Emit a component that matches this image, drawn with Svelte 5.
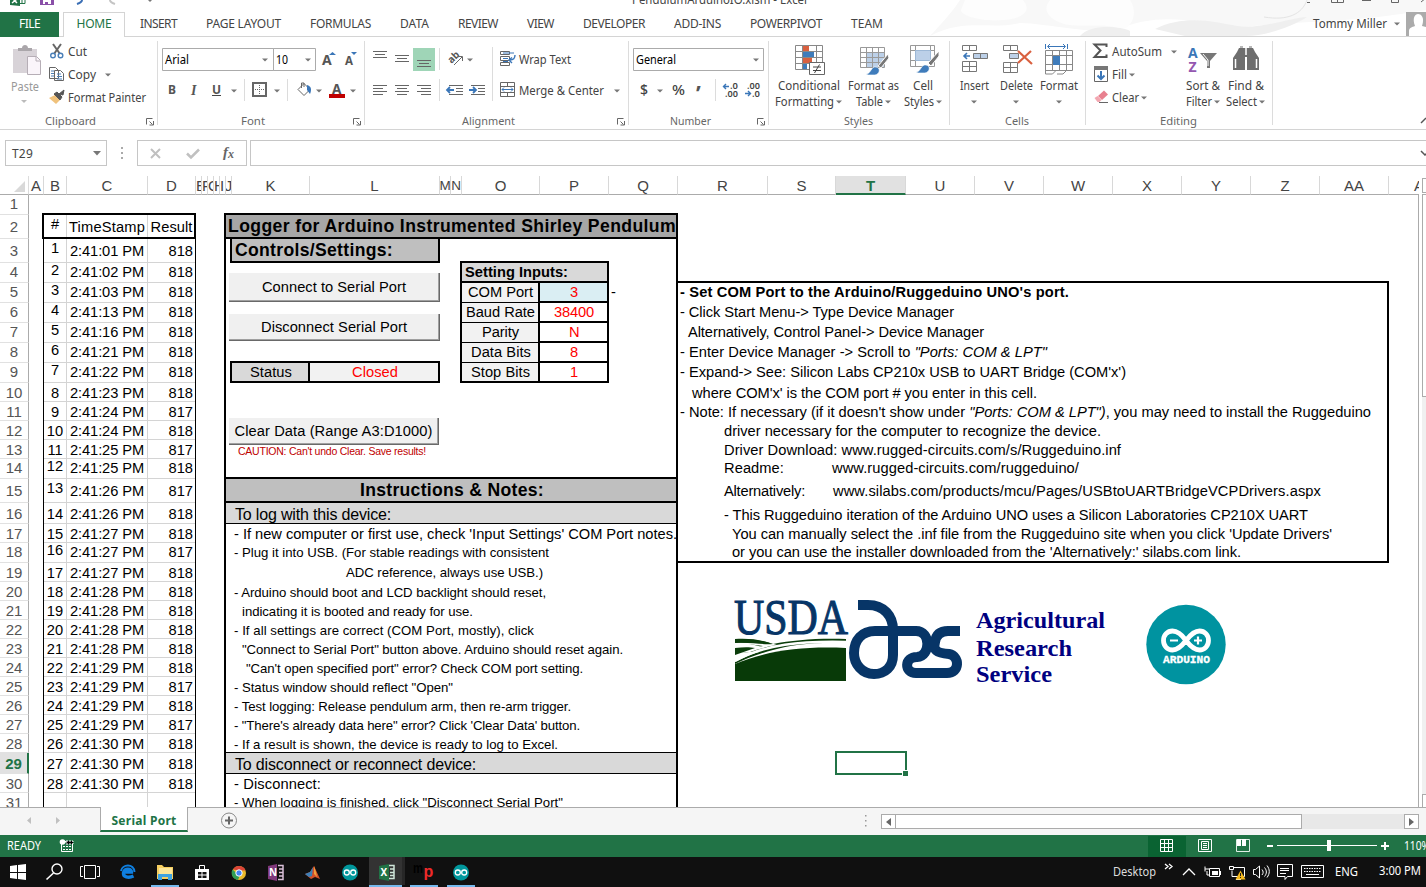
<script>
  // Shares out letter spacing so that a label fills the given width.
  function fit(node, width) {
    const n = node.textContent.length;
    const natural = node.getBoundingClientRect().width;
    if (width && n) node.style.letterSpacing = (width - natural) / n + 'px';
  }

  const tabs = [
    ['INSERT', 37], ['PAGE LAYOUT', 75], ['FORMULAS', 61], ['DATA', 29], ['REVIEW', 40], ['VIEW', 27],
    ['DEVELOPER', 62], ['ADD-INS', 47], ['POWERPIVOT', 72], ['TEAM', 32]
  ];

  const cols = [
    ['A', 15], ['B', 23], ['C', 81], ['D', 48], ['E', 6], ['F', 6], ['G', 6], ['H', 6], ['I', 6], ['J', 6],
    ['K', 78], ['L', 130], ['M', 11], ['N', 11], ['O', 78], ['P', 69], ['Q', 69], ['R', 90], ['S', 68],
    ['T', 70], ['U', 69], ['V', 69], ['W', 69], ['X', 69], ['Y', 69], ['Z', 69], ['AA', 69], ['AB', 30]
  ];
  const rowHeights = [
    20, 24, 24, 20, 20, 20, 20, 20, 20, 19, 19, 19, 19, 20, 24, 21, 19, 20, 19, 19,
    19, 19, 19, 19, 19, 19, 19, 19, 21, 19, 19
  ];
  const colTracks = '29px ' + cols.map((c) => c[1] + 'px').join(' ');
  const rowTracks = '19px ' + rowHeights.map((h) => h + 'px').join(' ');

  // Baseline correction of the 20px rows and of the larger and smaller type.
  const cellShift = (r) => (rowHeights[r - 1] === 20 ? -1 : 0);
  function lineShift(r, c = '') {
    if (c.startsWith('h')) return -2;
    if (c === 's') return r === 18 ? -1 : r >= 20 && r <= 28 ? 1 : 0;
    if (rowHeights[r - 1] === 20) return -2;
    return { 15: -1, 16: 1, 29: 1 }[r] ?? 0;
  }

  const times = [
    '01', '02', '03', '13', '16', '21', '22', '23', '24', '24', '25', '25', '26', '26', '27', '27', '27',
    '28', '28', '28', '28', '29', '29', '29', '29', '30', '30', '30'
  ];
  const low = [9, 11, 13, 16, 23, 25];
  const raised = [1, 2, 3, 4, 5, 6, 7, 12, 13, 16];
  const log = times.map((s, i) => ({
    n: i + 1,
    time: `2:41:${s} PM`,
    value: low.includes(i + 1) ? 817 : 818,
    up: raised.includes(i + 1)
  }));

  // Boxes: column start / end and row start / end as sheet letters and numbers.
  const at = (c) => cols.findIndex((k) => k[0] === c) + 2;
  const area = (c1, r1, c2, r2) => `${r1 + 1} / ${at(c1)} / ${r2 + 2} / ${at(c2) + 1}`;
  const boxes = [
    ['J', 2, 'Q', 31, 'thick white'],
    ['J', 2, 'Q', 2, 'thick title'],
    ['K', 3, 'L', 3, 'thick mid'],
    ['J', 15, 'Q', 15, 'thick mid'],
    ['J', 16, 'Q', 16, 'side light'],
    ['J', 29, 'Q', 29, 'side light lined'],
    ['O', 4, 'P', 4, 'thick light'],
    ['O', 5, 'O', 9, 'thick pale'],
    ['P', 5, 'P', 5, 'thick blue'],
    ['P', 6, 'P', 6, 'thick white'],
    ['P', 7, 'P', 7, 'thick white'],
    ['P', 8, 'P', 8, 'thick white'],
    ['P', 9, 'P', 9, 'thick white'],
    ['O', 5, 'O', 5, 'thin'],
    ['O', 6, 'O', 6, 'thin'],
    ['O', 7, 'O', 7, 'thin'],
    ['O', 8, 'O', 8, 'thin'],
    ['K', 9, 'K', 9, 'thick light'],
    ['L', 9, 'L', 9, 'thick pale'],
    ['R', 5, 'AA', 18, 'thick white']
  ];

  const texts = [
    { r: 2, x: 228, w: 448, t: 'Logger for Arduino Instrumented Shirley Pendulum', c: 'h b' },
    { r: 3, x: 235, w: 158, t: 'Controls/Settings:', c: 'h b' },
    { r: 15, x: 360, w: 184, t: 'Instructions & Notes:', c: 'h b' },
    { r: 16, x: 235, w: 156, t: 'To log with this device:', c: 'm' },
    { r: 29, x: 235, w: 241, t: 'To disconnect or reconnect device:', c: 'm' },
    { r: 4, x: 465, w: 103, t: 'Setting Inputs:', c: 'b' },
    { r: 5, x: 468, w: 65, t: 'COM Port' },
    { r: 6, x: 466, w: 69, t: 'Baud Rate' },
    { r: 7, x: 482, w: 37, t: 'Parity' },
    { r: 8, x: 471, w: 60, t: 'Data Bits' },
    { r: 9, x: 471, w: 59, t: 'Stop Bits' },
    { r: 5, x: 570, w: 8, t: '3', c: 'red' },
    { r: 6, x: 554, w: 40, t: '38400', c: 'red' },
    { r: 7, x: 569, w: 10, t: 'N', c: 'red' },
    { r: 8, x: 570, w: 8, t: '8', c: 'red' },
    { r: 9, x: 570, w: 8, t: '1', c: 'red' },
    { r: 5, x: 611, w: 5, t: '-' },
    { r: 9, x: 250, w: 42, t: 'Status' },
    { r: 9, x: 352, w: 46, t: 'Closed', c: 'red' },
    { r: 17, x: 234, w: 443, t: "- If new computer or first use, check 'Input Settings' COM Port notes." },
    { r: 18, x: 234, w: 315, t: '- Plug it into USB. (For stable readings with consistent', c: 's' },
    { r: 19, x: 346, w: 197, t: 'ADC reference, always use USB.)', c: 's' },
    { r: 20, x: 234, w: 312, t: '- Arduino should boot and LCD backlight should reset,', c: 's' },
    { r: 21, x: 242, w: 231, t: 'indicating it is booted and ready for use.', c: 's' },
    { r: 22, x: 234, w: 300, t: '- If all settings are correct (COM Port, mostly), click', c: 's' },
    { r: 23, x: 242, w: 381, t: '"Connect to Serial Port" button above. Arduino should reset again.', c: 's' },
    { r: 24, x: 246, w: 337, t: '"Can\'t open specified port" error? Check COM port setting.', c: 's' },
    { r: 25, x: 234, w: 219, t: '- Status window should reflect "Open"', c: 's' },
    { r: 26, x: 234, w: 337, t: '- Test logging: Release pendulum arm, then re-arm trigger.', c: 's' },
    { r: 27, x: 234, w: 346, t: '- "There\'s already data here" error? Click \'Clear Data\' button.', c: 's' },
    { r: 28, x: 234, w: 324, t: '- If a result is shown, the device is ready to log to Excel.', c: 's' },
    { r: 30, x: 234, w: 87, t: '- Disconnect:' },
    { r: 31, x: 234, w: 329, t: '- When logging is finished, click "Disconnect Serial Port"', c: 's' },
    { r: 5, x: 680, w: 389, t: "- Set COM Port to the Arduino/Ruggeduino UNO's port.", c: 'b' },
    { r: 6, x: 680, w: 274, t: '- Click Start Menu-> Type Device Manager' },
    { r: 7, x: 688, w: 296, t: 'Alternatively, Control Panel-> Device Manager' },
    { r: 8, x: 680, w: 367, t: '- Enter Device Manager -> Scroll to ', i: '"Ports: COM & LPT"' },
    { r: 9, x: 680, w: 446, t: "- Expand-> See: Silicon Labs CP210x USB to UART Bridge (COM'x')" },
    { r: 10, x: 692, w: 345, t: "where COM'x' is the COM port # you enter in this cell." },
    { r: 11, x: 680, w: 691, t: "- Note: If necessary (if it doesn't show under ", i: '"Ports: COM & LPT")', e: ', you may need to install the Ruggeduino' },
    { r: 12, x: 724, w: 377, t: 'driver necessary for the computer to recognize the device.' },
    { r: 13, x: 724, w: 397, t: 'Driver Download: www.rugged-circuits.com/s/Ruggeduino.inf' },
    { r: 14, x: 724, w: 60, t: 'Readme:' },
    { r: 14, x: 832, w: 247, t: 'www.rugged-circuits.com/ruggeduino/' },
    { r: 15, x: 724, w: 81, t: 'Alternatively:' },
    { r: 15, x: 833, w: 488, t: 'www.silabs.com/products/mcu/Pages/USBtoUARTBridgeVCPDrivers.aspx' },
    { r: 16, x: 724, w: 584, t: '- This Ruggeduino iteration of the Arduino UNO uses a Silicon Laboratories CP210X UART' },
    { r: 17, x: 732, w: 600, t: "You can manually select the .inf file from the Ruggeduino site when you click 'Update Drivers'" },
    { r: 18, x: 732, w: 509, t: "or you can use the installer downloaded from the 'Alternatively:' silabs.com link." }
  ];
</script>

{#snippet t(x, y, w, s, c = '')}
  <text {x} {y} textLength={w} lengthAdjust="spacingAndGlyphs" class={c}>{s}</text>
{/snippet}
{#snippet arrow(x, y, c = '#777')}
  <path d="M{x - 3} {y - 1}h6l-3 3z" fill={c} />
{/snippet}
{#snippet launcher(x)}
  <path d="M{x} 124.500v-6h6M{x + 3} 121.500l3 3M{x + 3} 125h4v-4" fill="none" stroke="#666" />
{/snippet}
{#snippet infinity(cx, cy)}
  <circle {cx} {cy} r="8" fill="#00979c" />
  <circle cx={cx - 3.2} {cy} r="2.500" fill="none" stroke="#fff" stroke-width="1.300" />
  <circle cx={cx + 3.2} {cy} r="2.500" fill="none" stroke="#fff" stroke-width="1.300" />
{/snippet}

<div class="window">
  <header>
    <svg class="art" viewBox="920 0 506 36" width="506" height="36">
      <path d="M930 36C965 18 990 30 1020 23C1050 24 1080 32 1112 31C1140 20 1160 18 1184 20L1240 28C1290 20 1340 25 1426 10V0H960C950 15 940 25 930 36z" fill="#f8f8f8" />
      <path d="M965 0h58c10 12-2 19-20 20-20 2-42-4-42-10zM1050 0h80c8 12 3 26-8 30-14-8-45-2-58-6-16-5-22-14-14-24z" fill="#fdfdfd" />
      <path d="M1080 36c10-12 40-10 50-5v5zM1155 29c30-15 60-7 82-3 22 4 56-9 70-9-14 9-40 19-62 19h-60z" fill="#efefef" />
      <path d="M1264 17c24 4 38-3 43-17" stroke="#e4e4e4" fill="none" />
    </svg>
    <svg class="titlebar" viewBox="0 0 1426 12" width="1426" height="12">
      <path d="M10 0h10v6l-10-1z" fill="#217346" /><path d="M12 3l5-4M13-1l4 4" stroke="#fff" stroke-width="1.500" />
      <path d="M20 3.500h5V0M22 0v3" stroke="#217346" fill="none" />
      <path d="M40 0h14v5H40z" fill="#8a4fa8" /><path d="M43 0h8v4h-3V2h-3v2h-2z" fill="#fff" />
      <path d="M82 0c0 2-2 3-5 4" stroke="#3b6fb5" stroke-width="2" fill="none" />
      <path d="M110 0c0 2 2 3 5 4" stroke="#c4c4c4" stroke-width="2" fill="none" />
      {@render arrow(150, 0)}
      {@render t(632, 4, 175, 'PendulumArduinoIO.xlsm - Excel')}
      <path d="M1307 2.500h3M1331.500 0v2.500h12V0M1337.500 0v2M1362 .5h9M1391.500 0v2.500h7V0M1421 2l5-4" stroke="#666" fill="none" />
    </svg>
    <nav>
      <span class="file"><span use:fit={21}>FILE</span></span>
      <span class="home"><span use:fit={35}>HOME</span></span>
      <div class="tabs">
        {#each tabs as [name, w]}
          <span class="tab" style:width="{w}px"><span use:fit={w}>{name}</span></span>
        {/each}
      </div>
      <svg class="user" viewBox="1310 12 116 24" width="116" height="24">
        {@render t(1313, 28, 74, 'Tommy Miller')}
        {@render arrow(1397, 23.5)}
        <path d="M1406 12h20v24h-20z" fill="#ababab" />
        <path d="M1409 36v-5c0-3 3-4 6-5-3-8 0-12 3-12s7 3 4 12l4 1v9z" fill="#fff" />
      </svg>
    </nav>
  </header>

  <section class="ribbon">
    <svg class="group" viewBox="0 37 158 92" width="158" height="92">
      <path d="M13 49h24v24H13z" fill="#d8d3d8" /><path d="M18 51v-3h4c0-4 6-4 6 0h4v3z" fill="#aaa6aa" />
      <path d="M27.500 56.500h9l4 4v14h-13z" fill="#faf5fa" stroke="#b6aeb6" /><path d="M36 57v4h4" stroke="#b6aeb6" fill="none" />
      {@render t(11, 91, 28, 'Paste', 'dim')}
      {@render arrow(24, 101, '#bbb')}
      <path d="M53 44l7 10M61 44l-7 10" stroke="#666" stroke-width="2" />
      <circle cx="53" cy="55.500" r="2.300" fill="#fff" stroke="#4a7fb8" stroke-width="1.400" />
      <circle cx="60.500" cy="55.500" r="2.300" fill="#fff" stroke="#4a7fb8" stroke-width="1.400" />
      {@render t(68, 56, 19, 'Cut')}
      <path d="M49.500 67.500h6l3 3v8h-9zM54.500 70.500h6l3 3v7h-9z" fill="#fff" stroke="#666" />
      <path d="M51 71h3M51 73.500h3M51 76h3M57 74h4M57 76.500h5M57 79h5" stroke="#4a7fb8" />
      {@render t(68, 79, 28, 'Copy')}
      {@render arrow(108, 74.5)}
      <path d="M49 98l6-3 5 5-4 4z" fill="#f0c27c" /><path d="M54 94l6 6 2-3-5-5zM59 94l5-4-1 5z" fill="#555" stroke="#555" />
      {@render t(68, 102, 78, 'Format Painter')}
      {@render t(45, 125, 51, 'Clipboard', 'cap')}
      {@render launcher(146.500)}
      <path d="M157.500 41v84" stroke="#dcdcdc" />
    </svg>
    <svg class="group" viewBox="158 37 207 92" width="207" height="92">
      <path d="M162.500 48.500h111v22h-111zM273.500 48.500h42v22h-42z" fill="#fff" stroke="#ababab" />
      {@render t(165, 64, 24, 'Arial', 'blk')}{@render arrow(265, 59.5)}
      {@render t(276, 64, 12, '10', 'blk')}{@render arrow(308, 59.5)}
      <text x="322" y="65" class="sb" style:font-size="14px">A</text><path d="M329 55l3.500-3 3.500 3z" fill="#3a76b8" />
      <text x="345" y="65" class="sb" style:font-size="11.500px">A</text><path d="M351 52h6l-3 3z" fill="#3a76b8" />
      <text x="168" y="94" class="sb">B</text>
      <text x="191" y="94.500" class="sb it">I</text>
      <text x="212" y="94" class="sb">U</text><path d="M212 95.500h9" stroke="#444" />
      {@render arrow(234, 90.5)}
      <path d="M244.500 79v22M287.500 79v22" stroke="#dcdcdc" />
      <path d="M253 83h13v13h-13z" fill="#fff" stroke="#666" stroke-width="2" />
      <path d="M255 89.500h9M259.500 85v9" stroke="#666" stroke-dasharray="1 1" />
      {@render arrow(277, 90.5)}
      <path d="M298 89.500l6-6 6 6-6 6zM301.500 88v-5h2.500v4" fill="#fff" stroke="#666" /><path d="M307 85c4 1 5 4 3 9l-3-4z" fill="#3a76b8" />
      {@render arrow(319, 90.5)}
      <text x="332" y="94" class="sb" style:font-size="13.500px">A</text><path d="M329 94h16v4h-16z" fill="#c00000" />
      {@render arrow(353, 90.5)}
      {@render t(241, 125, 24, 'Font', 'cap')}
      {@render launcher(353.500)}
      <path d="M364.500 41v84" stroke="#dcdcdc" />
    </svg>
    <svg class="group" viewBox="365 37 264 92" width="264" height="92">
      <path d="M413 48h22v23h-22z" fill="#9fd5b7" />
      <path d="M373 51.500h14M375 54.500h10M373 57.500h14" stroke="#666" />
      <path d="M395 55.500h14M397 58.500h10M395 61.500h14" stroke="#666" />
      <path d="M417 60.500h14M419 63.500h10M417 66.500h14" stroke="#666" />
      <path d="M373 85.500h14M373 88.500h10M373 91.500h14M373 94.500h10M395 85.500h14M397 88.500h10M395 91.500h14M397 94.500h10M417 85.500h14M421 88.500h10M417 91.500h14M421 94.500h10" stroke="#666" />
      <path d="M439.500 48v22M439.500 79v22M492.500 47v54" stroke="#dcdcdc" />
      <text transform="translate(451.500 64) rotate(-45)" class="sb" style:font-size="10px">ab</text>
      <path d="M454 65l8-8M458 56.500h4.500V61" stroke="#666" fill="none" />
      {@render arrow(470, 59.5)}
      <path d="M449 85.500h14M456 88.500h7M456 91.500h7M449 94.500h14M471 85.500h14M478 88.500h7M478 91.500h7M471 94.500h14" stroke="#666" />
      <path d="M454 90h-6M450 87l-3 3 3 3M469 90h6M473 87l3 3-3 3" stroke="#3a76b8" stroke-width="1.800" fill="none" />
      <path d="M500.500 51.500h9v3h-9zM500.500 56.500h9v4h-9zM500.500 62.500h9v3h-9z" fill="#fff" stroke="#666" />
      <path d="M503 53h11M503 58.500h5M503 61.500h5" stroke="#3a76b8" />
      <path d="M515 55c0 4-2 5-5 5M512 57.500l-3 2.500 3 3" stroke="#3a76b8" fill="none" stroke-width="1.400" />
      {@render t(519, 64, 52, 'Wrap Text')}
      <path d="M500.500 82.500h14v14h-14zM500 86.500h15M500 92.500h15M507.500 82v4M507.500 93v4" fill="none" stroke="#666" />
      <path d="M502 89.500h11M504 87.500l-2 2 2 2M511 87.500l2 2-2 2" stroke="#3a76b8" fill="none" />
      {@render t(519, 95, 85, 'Merge & Center')}
      {@render arrow(617, 90.5)}
      {@render t(462, 125, 53, 'Alignment', 'cap')}
      {@render launcher(617.500)}
      <path d="M628.500 41v84" stroke="#dcdcdc" />
    </svg>
    <svg class="group" viewBox="629 37 140 92" width="140" height="92">
      <path d="M633.500 48.500h130v22h-130z" fill="#fff" stroke="#ababab" />
      {@render t(636, 64, 40, 'General', 'blk')}{@render arrow(756, 59.5)}
      <text x="640" y="95" class="pct">$</text>{@render arrow(660, 90.5)}
      {@render t(672, 95, 13, '%', 'pct')}
      <text x="696" y="101" class="sb" style:font-size="22px">’</text>
      <path d="M715.500 79v22" stroke="#dcdcdc" />
      {@render t(730, 89, 8, '.0', 'dec')}{@render t(725, 96.5, 13, '.00', 'dec')}
      {@render t(747, 89, 13, '.00', 'dec')}{@render t(752, 96.5, 8, '.0', 'dec')}
      <path d="M729 86.500h-5M726 84l-2.500 2.500L726 89M745 93.500h5M748 91l2.500 2.500L748 96" stroke="#3a76b8" stroke-width="1.400" fill="none" />
      {@render t(670, 125, 41, 'Number', 'cap')}
      {@render launcher(757.500)}
      <path d="M768.500 41v84" stroke="#dcdcdc" />
    </svg>
    <svg class="group" viewBox="769 37 181 92" width="181" height="92">
      <path d="M795.500 45.500h27v24h-27zM795 51.500h28M795 57.500h28M795 63.500h28M802.500 45v25M816.500 45v25" fill="#fff" stroke="#888" />
      <path d="M803 46h6v5h-6zM803 58h9v5h-9z" fill="#d9603f" /><path d="M803 52h11v5h-11zM803 64h4v5h-4z" fill="#3f7cbb" />
      <path d="M809.500 62.500h15v12h-15z" fill="#fff" stroke="#666" /><path d="M813 67h8M813 70.500h8M819.500 64.500l-5 8.500" stroke="#444" />
      {@render t(778, 90, 62, 'Conditional')}
      {@render t(775, 106, 59, 'Formatting')}{@render arrow(839, 101.5)}
      <path d="M866 53h18v14h-18z" fill="#bcd0e8" />
      <path d="M860.500 47.500h24v20h-24zM860 52.500h25M860 57.500h25M860 62.500h25M866.500 47v21M872.500 47v21M878.500 47v21" fill="none" stroke="#999" />
      <path d="M888 54l-10 12 3 2 8-10z" fill="#777" stroke="#fff" /><path d="M866 74c5 0 5-8 10-7s4 7-1 8h-7z" fill="#3f7cbb" stroke="#fff" stroke-width=".6" />
      {@render t(848, 90, 51, 'Format as')}
      {@render t(856, 106, 27, 'Table')}{@render arrow(888, 101.5)}
      <path d="M910.500 45.500h24v21h-24zM910 50.500h25M910 60.500h25M915.500 45v21M930.500 45v21" fill="#fff" stroke="#999" /><path d="M915.500 50.500h15v10h-15z" fill="#bcd0e8" stroke="#9db8d6" />
      <path d="M939 51l-11 12 3 3 8-10z" fill="#777" stroke="#fff" /><path d="M916 72c5 0 5-8 10-7s4 7-1 8h-7z" fill="#3f7cbb" stroke="#fff" stroke-width=".6" />
      {@render t(913, 90, 20, 'Cell')}
      {@render t(904, 106, 30, 'Styles')}{@render arrow(939, 101.5)}
      {@render t(844, 125, 29, 'Styles', 'cap')}
      <path d="M949.500 41v84" stroke="#dcdcdc" />
    </svg>
    <svg class="group" viewBox="950 37 136 92" width="136" height="92">
      <path d="M962.500 45.500h14v5h-14zM969.500 45v5M962.500 61.500h14v10h-14zM962 66.500h15M969.500 61v10" fill="#fff" stroke="#777" />
      <path d="M973.500 53.500h14v5h-14zM980.500 53v5" fill="#bcd0e8" stroke="#777" /><path d="M970 56h-6M967 53l-3 3 3 3" stroke="#3a76b8" stroke-width="1.600" fill="none" />
      {@render t(960, 90, 29, 'Insert')}{@render arrow(974, 101.5)}
      <path d="M1003.500 45.500h14v5h-14zM1010.500 45v5M1003.500 62.500h14v10h-14zM1003 67.500h15M1010.500 62v10" fill="#fff" stroke="#777" />
      <path d="M1009.500 53.500h9v5h-9z" fill="#bcd0e8" stroke="#777" /><path d="M1018 51l14 13M1031 51l-13 12" stroke="#d9603f" stroke-width="2.200" />
      {@render t(1000, 90, 33, 'Delete')}{@render arrow(1016, 101.5)}
      <path d="M1045.500 50.500h27v20h-27zM1045 55.500h28M1045 64.500h28M1052.500 50v20M1059.500 50v20M1066.500 50v20M1045.500 70v4h7l3-3M1057 74h6l3-3" fill="#fff" stroke="#888" />
      <path d="M1053 56h7v9h-7z" fill="#3f7cbb" /><path d="M1045.500 44v5M1067.500 44v5M1048 46.500h17M1050 44l-2.500 2.500L1050 49M1063 44l2.500 2.500L1063 49" stroke="#3a76b8" fill="none" />
      {@render t(1040, 90, 38, 'Format')}{@render arrow(1059, 101.5)}
      {@render t(1005, 125, 24, 'Cells', 'cap')}
      <path d="M1085.500 41v84" stroke="#dcdcdc" />
    </svg>
    <svg class="group last" viewBox="1086 37 340 92" width="340" height="92">
      <path d="M1106.500 47v-2.500h-12l6 6-6 6.500h12v-2.500" fill="none" stroke="#555" stroke-width="2" />
      {@render t(1112, 56, 50, 'AutoSum')}{@render arrow(1174, 51.5)}
      <path d="M1094.500 66.500h13v15h-13z" fill="#fff" stroke="#666" /><path d="M1094 66h14v4h-14z" fill="#777" /><path d="M1101 71v8M1097.500 75.500l3.500 3.500 3.500-3.500" stroke="#3a76b8" stroke-width="2" fill="none" />
      {@render t(1112, 79, 15, 'Fill')}{@render arrow(1132, 74.5)}
      <path d="M1098 96l6-5.500 4 4-6 5.500z" fill="#e8808f" /><path d="M1094.500 98l3-2 4 4-2 2h-2z" fill="#f3a7b1" /><path d="M1099 102.500h9" stroke="#666" />
      {@render t(1112, 102, 27, 'Clear')}{@render arrow(1144, 97.5)}
      <text x="1188" y="57.500" class="az">A</text><text x="1188.500" y="71.500" class="az z">Z</text>
      <path d="M1200 53h17l-7 8v7h-3v-7z" fill="#777" /><path d="M1203 54l5 6v6" stroke="#fff" fill="none" />
      {@render t(1186, 90, 34, 'Sort &')}{@render t(1186, 106, 26, 'Filter')}{@render arrow(1217, 101.5)}
      <path d="M1239 48h7v9h-1v13h-12v-12l4-6zM1253 48h-7v9h1v13h12v-12l-4-6z" fill="#6e6e6e" /><path d="M1246 48v7M1246 61v9M1235.500 59v9M1256.500 59v9" stroke="#fff" stroke-width="1.500" /><path d="M1240 47h3M1249 47h3" stroke="#6e6e6e" />
      {@render t(1228, 90, 36, 'Find &')}{@render t(1226, 106, 31, 'Select')}{@render arrow(1262, 101.5)}
      {@render t(1160, 125, 37, 'Editing', 'cap')}
      <path d="M1272.500 41v84" stroke="#dcdcdc" />
      <path d="M1421 123l5-5" stroke="#555" stroke-width="1.500" />
    </svg>
  </section>

  <section class="formula">
    <div class="namebox"><span use:fit={21}>T29</span><svg width="8" height="5"><path d="M0 0h8l-4 4.500z" fill="#777" /></svg></div>
    <svg class="dots" width="4" height="16"><path d="M1 2h2v2H1zM1 7h2v2H1zM1 12h2v2H1z" fill="#aaa" /></svg>
    <div class="fx">
      <svg viewBox="138 141 108 24" width="108" height="24">
        <path d="M151 149l9 9M160 149l-9 9" stroke="#c0c0c0" stroke-width="2" />
        <path d="M187 153.500l4 4 8-8" stroke="#c0c0c0" stroke-width="2.500" fill="none" />
        <text x="223" y="157" class="fxt">f</text><text x="228" y="158" class="fxt x">x</text>
      </svg>
    </div>
    <div class="input"><svg width="8" height="6"><path d="M1 1l4 4 4-4" stroke="#555" stroke-width="1.500" fill="none" /></svg></div>
  </section>

  <section class="sheetwrap">
    <div class="sheet" style:grid-template-columns={colTracks} style:grid-template-rows={rowTracks}>
      <div class="corner"><svg width="11" height="11"><path d="M11 0v11H0z" fill="#d9d9d9" /></svg></div>
      {#each cols as [name, w]}
        <div class="ch" class:on={name === 'T'} class:last={name === 'AB'} class:slim={w === 6 && name !== 'J'} class:narrow={w === 11}><span>{name}</span></div>
      {/each}
      {#each rowHeights as _, i}
        <div class="rh" class:on={i === 28} style:grid-row={i + 2}><span style:top="{cellShift(i + 1)}px">{i + 1}</span></div>
      {/each}
      <div class="cell" style:grid-area={area('B', 2, 'B', 2)}><span class="up2">#</span></div>
      <div class="cell" style:grid-area={area('C', 2, 'C', 2)}><span use:fit={76}>TimeStamp</span></div>
      <div class="cell" style:grid-area={area('D', 2, 'D', 2)}><span use:fit={42}>Result</span></div>
      {#each log as e}
        <div class="cell" style:grid-area={area('B', e.n + 2, 'B', e.n + 2)}><span style:top="{cellShift(e.n + 2) - (e.up ? (rowHeights[e.n + 1] === 24 ? 3 : 2) : 0)}px">{e.n}</span></div>
        <div class="cell" style:grid-area={area('C', e.n + 2, 'C', e.n + 2)}><span use:fit={74} style:top="{cellShift(e.n + 2)}px">{e.time}</span></div>
        <div class="cell num" style:grid-area={area('D', e.n + 2, 'D', e.n + 2)}><span style:top="{cellShift(e.n + 2)}px">{e.value}</span></div>
      {/each}
      <div class="cell" style:grid-area={area('B', 31, 'B', 31)}></div>
      <div class="cell" style:grid-area={area('C', 31, 'C', 31)}></div>
      <div class="cell" style:grid-area={area('D', 31, 'D', 31)}></div>
      <div class="thin" style:grid-area={area('B', 3, 'D', 31)}></div>
      <div class="thick" style:grid-area={area('B', 2, 'D', 2)}></div>
      {#each boxes as [c1, r1, c2, r2, kind]}
        <div class={kind} style:grid-area={area(c1, r1, c2, r2)}></div>
      {/each}
      {#each texts as x}
        <div class="line {x.c ?? ''}" style:grid-row={x.r + 1} style:padding-left="{x.x}px">
          <span use:fit={x.w} style:top="{lineShift(x.r, x.c)}px">{x.t}{#if x.i}<i>{x.i}</i>{/if}{x.e ?? ''}</span>
        </div>
      {/each}
      <div class="selection" style:grid-area={area('T', 29, 'T', 29)}></div>
    </div>

    <button class="connect"><span use:fit={144}>Connect to Serial Port</span></button>
    <button class="disconnect"><span use:fit={146}>Disconnect Serial Port</span></button>
    <button class="clear"><span use:fit={198}>Clear Data (Range A3:D1000)</span></button>
    <div class="caution"><span use:fit={188}>CAUTION: Can't undo Clear. Save results!</span></div>

    <svg class="logos" viewBox="730 595 500 95" width="500" height="95">
      <text x="734" y="634" textLength="114" lengthAdjust="spacingAndGlyphs" class="usda">USDA</text>
      <path d="M735 639c15-1 28 1 38 5 20-4 45-6 73-5v4c-35-1-55 2-73 7-15 4-28 9-38 14v-2c8-4 16-8 24-10-8 0-16 0-24 1v-3c11-1 22-1 30-2-8-3-18-5-30-5z" fill="#0b3d0b" />
      <path d="M735 658c14-6 28-11 42-13-10-3-23-3-42-2v2c14-1 22 0 28 1-9 2-18 4-28 5v3c10-2 16-2 20-1z" fill="#fff" />
      <path d="M735 648c8-1 15-1 20 0l-20 7zM735 639c14 0 27 1 38 5-12 1-22-2-38-1z" fill="#0b3d0b" />
      <path d="M735 661c30-17 66-20 111-19" stroke="#fff" stroke-width="2.500" fill="none" />
      <path d="M735 664c33-14 70-18 111-16v33H735z" fill="#083a08" />
      <path d="M858 605h10c16 0 25 11 25 25v25c0 12-8 19-19 19-12 0-20-10-20-21 0-13 8-22 21-22h41c15 0 15 25 1 26-13 0-13 16-1 16h31c13 0 13-17 2-19-13-1-16-4-14-12 1-7 5-11 13-11h12" fill="none" stroke="#073567" stroke-width="10" />
      {@render t(976, 628, 129, 'Agricultural', 'ars')}
      {@render t(976, 656, 96, 'Research', 'ars')}
      {@render t(976, 682, 76, 'Service', 'ars')}
      <circle cx="1186" cy="644.500" r="39.700" fill="#0093a0" />
      <path d="M1186 640.500c-5-7-9-9.500-13.500-9.500-5 0-9 4-9 9.500s4 9.500 9 9.500c4.500 0 8.500-3 13.500-9.500s9-9.500 13.500-9.500c5 0 9 4 9 9.500s-4 9.500-9 9.500c-4.500 0-8.500-3-13.500-9.500z" fill="none" stroke="#fff" stroke-width="4.800" />
      <path d="M1170 640.500h8M1194 640.500h8M1198 636.500v8" stroke="#fff" stroke-width="2.200" />
      {@render t(1163, 662.5, 47, 'ARDUINO', 'ard')}
    </svg>

    <div class="vscroll">
      <div class="vbtn"></div><div class="vthumb"></div><div class="vtrack"></div><div class="vbtn"></div>
    </div>
  </section>

  <section class="sheettabs">
    <svg class="nav" width="100" height="26"><path d="M31 9v7l-4-3.500zM56 9v7l4-3.500z" fill="#c0c0c0" /></svg>
    <span class="active"><span use:fit={65}>Serial Port</span></span>
    <svg width="60" height="26"><circle cx="41" cy="12.500" r="7.500" fill="none" stroke="#888" /><path d="M37 12.500h8M41 8.500v8" stroke="#666" stroke-width="2" /></svg>
    <svg class="grip" width="4" height="14"><path d="M1 1h1.500v1.500H1zM1 6h1.500v1.500H1zM1 11h1.500v1.500H1z" fill="#999" /></svg>
    <div class="hscroll">
      <div class="hbtn"><svg width="5" height="8"><path d="M5 0v8L0 4z" fill="#666" /></svg></div>
      <div class="hthumb"></div><div class="htrack"></div>
      <div class="hbtn"><svg width="5" height="8"><path d="M0 0v8l5-4z" fill="#666" /></svg></div>
    </div>
  </section>

  <section class="status">
    <svg viewBox="0 835 1426 22" width="1426" height="22">
      {@render t(7, 850, 34, 'READY', 'w')}
      <path d="M61.500 841.500h11v10h-11z" fill="none" stroke="#fff" /><path d="M66 841h7v3h-7zM63 846.500h8M63 849.500h8" stroke="#fff" stroke-dasharray="2 1" /><circle cx="62.500" cy="842" r="2.800" fill="#fff" />
      <path d="M1148 836h38v21h-38z" fill="#0a6332" />
      <path d="M1160.500 839.500h12v12h-12zM1164.500 839v13M1168.500 839v13M1160 843.500h13M1160 847.500h13" fill="none" stroke="#fff" />
      <path d="M1198.500 839.500h13v12h-13zM1201.500 841.500h7v8h-7zM1203 843.500h4M1203 845.500h4M1203 847.500h4" fill="none" stroke="#fff" />
      <path d="M1236.500 839.500h13v12h-13z" fill="none" stroke="#dfeee5" /><path d="M1237 839h4v7h-4zM1242 839h4v7h-4z" fill="#fff" />
      <path d="M1267 846h6M1381 846h8M1385 842v8" stroke="#fff" stroke-width="2" /><path d="M1277 845.500h100" stroke="#fff" /><path d="M1327 840h4v11h-4z" fill="#fff" />
      {@render t(1404, 850, 26, '110%', 'w')}
    </svg>
  </section>

  <footer>
    <svg viewBox="0 857 1426 30" width="1426" height="30">
      <path d="M10 866l7-1v7h-7zM18 865l8-1v8h-8zM10 873h7v6l-7-1zM18 873h8v7l-8-1z" fill="#fff" />
      <circle cx="57" cy="869" r="5" fill="none" stroke="#fff" stroke-width="1.400" /><path d="M53.500 873l-7 6.500" stroke="#fff" stroke-width="1.600" />
      <path d="M84.500 865.500h11v13h-11zM83 866.500h-2.500v10H83M97 866.500h2.500v10H97" fill="none" stroke="#fff" />
      <path d="M124 872h7.500c0-4-7-4-8 .5s5 6 10 3.500" fill="none" stroke="#0f7fe0" stroke-width="3.300" /><path d="M121 871c1-7 13-8 13.500 1" fill="none" stroke="#0f7fe0" stroke-width="2" />
      <path d="M157 865h5l2 2h9v12h-16z" fill="#f6cf60" /><path d="M159 868h13v9h-13z" fill="#fbe59a" /><path d="M158 880v-6h14v6h-4v-3h-6v3z" fill="#3fa2e0" />
      <path d="M195 869h14v11h-14z" fill="#fff" /><path d="M199.500 869v-3.500h5v3.500" fill="none" stroke="#fff" /><path d="M198 872h3.500v2.500H198zM202.500 872h4v2.500h-4zM198 875.500h3.500v2.500H198zM202.500 875.500h4v2.500h-4z" fill="#111" />
      <circle cx="239" cy="873" r="7" fill="#e9b92a" /><path d="M233 869.500a7 7 0 0 1 12.500 1H239z" fill="#db4437" /><path d="M232.500 869.500a7 7 0 0 0 5.500 10.400l2-5-3.500-2z" fill="#2f9e56" /><circle cx="239" cy="873" r="3.200" fill="#4285f4" stroke="#fff" />
      <path d="M268 866l9-2v17l-9-2z" fill="#80397b" /><text x="269" y="876" class="wb">N</text><path d="M278 865.500h5v14h-5M279 869h4M279 872.500h4M279 876h4" stroke="#d9bfd7" stroke-width="1.500" fill="none" />
      <path d="M305 874l5-2 4-6 6 13-5-2-4 2z" fill="#d4502a" /><path d="M305 874l5-2 3-5-1 9-3 1z" fill="#3b7fb8" /><path d="M314 866l2 6 1 5-3-3z" fill="#f0a03c" />
      {@render infinity(350, 872.5)}
      <path d="M369 857h33v28h-33z" fill="#333" /><path d="M402 857h3v28h-3z" fill="#272727" />
      <path d="M379 866l10-2v17l-10-2z" fill="#217346" /><text x="380.500" y="876" class="wb">X</text><path d="M389 865.500h5v13h-5M390 869h4M390 872.500h4M390 875.500h4" stroke="#cfe6d9" stroke-width="1.500" fill="none" />
      <text x="413" y="873" textLength="10" lengthAdjust="spacingAndGlyphs" class="mp">m</text><text x="423.500" y="877" class="mp p">p</text>
      {@render infinity(461, 872.5)}
      <path d="M151 885h28v2h-28zM369 885h33v2h-33zM410 885h28v2h-28zM447 885h28v2h-28z" fill="#76b9ed" />
      {@render t(1113, 876, 43, 'Desktop', 'w dt')}
      <path d="M1165 864l3 2.500-3 2.500M1169 864l3 2.500-3 2.500M1183 875l6-6 6 6" fill="none" stroke="#fff" stroke-width="1.300" />
      <path d="M1209.500 868.500h10v8h-10zM1220.500 871v4M1205 869h4M1205 866.500v5M1207 871v4h3" fill="none" stroke="#fff" /><path d="M1212 871h6v4h-6z" fill="#fff" />
      <path d="M1229.500 866.500h4v3h-4zM1234 867.500h10.500v9H1232v-6M1236 879.500h5" fill="none" stroke="#fff" /><path d="M1240.500 870.500l5 9h-10z" fill="#f5b91c" /><path d="M1240.500 873v3M1240.500 877v1" stroke="#222" />
      <path d="M1253.500 869.500h2l4-3.500v12l-4-3.500h-2zM1262 869.500c1.500 2 1.500 3.500 0 5.500M1264.500 867.500c2.500 3 2.500 6 0 9M1267 865.500c3 4 3 8 0 12" fill="none" stroke="#fff" />
      <path d="M1277.500 864.500h15v12h-5l-2.500 3v-3h-7.500zM1280 868.500h9M1280 870.500h9M1280 873.500h6" fill="none" stroke="#fff" />
      <path d="M1301.500 865.500h22v12h-22z" fill="none" stroke="#fff" /><path d="M1304 868.500h17M1304 871.500h17" stroke="#fff" stroke-dasharray="1.500 1" /><path d="M1306 874.500h13" stroke="#fff" />
      {@render t(1335, 876, 23, 'ENG', 'w')}
      {@render t(1379, 875, 42, '3:00 PM', 'w')}
    </svg>
  </footer>
</div>

<style>
  :global(body) { margin: 0; overflow: hidden; background: #fff; }
  .window { width: 1426px; height: 887px; overflow: hidden; display: flex; flex-direction: column; background: #fff; color: #444; font: 12px 'Noto Sans', 'Open Sans', sans-serif; position: relative; }
  svg { display: block; flex: none; }
  svg text { fill: #444; font-size: 12px; }
  svg text.dim { fill: #999; }
  svg text.cap { fill: #666; font-size: 11.5px; }
  svg text.blk { fill: #000; }
  svg text.sb { font-weight: 700; fill: #555; }
  svg text.it { font-style: italic; font-family: 'Liberation Serif', serif; font-size: 14px; }
  svg text.pct { font-size: 14px; font-weight: 500; }
  svg text.dec { font-size: 8.5px; font-weight: 600; }
  svg text.az { font: 700 14px 'Open Sans', sans-serif; fill: #3a76b8; }
  svg text.z { fill: #9457b0; }
  svg text.fxt { font: italic 700 15px 'Liberation Serif', serif; fill: #666; }
  svg text.x { font-size: 12px; }
  svg text.w { fill: #fff; }
  svg text.wb { font-weight: 700; font-size: 10px; fill: #fff; }
  svg text.dt { fill: #ddd; }
  svg text.mp { font: 900 15px 'Liberation Sans', sans-serif; fill: #000; }
  svg text.p { fill: #ee2a2a; font-size: 16px; }

  header { height: 36px; flex: none; display: flex; flex-direction: column; position: relative; border-bottom: 1px solid #d4d4d4; }
  .art { position: absolute; right: 0; top: 0; }
  .titlebar, nav { position: relative; }
  nav { display: flex; height: 25px; margin-bottom: -1px; white-space: nowrap; line-height: 24px; }
  .file { width: 59px; background: #217346; color: #fff; display: flex; justify-content: center; }
  .home { width: 60px; margin-left: 4px; border: 1px solid #d4d4d4; border-bottom: 0; background: #fff; color: #217346; display: flex; justify-content: center; line-height: 22px; }
  .tabs { display: flex; gap: 29px; margin-left: 15px; flex: 1; }
  .tab { flex: none; }
  .user { margin-left: auto; }

  .ribbon { display: flex; height: 92px; flex: none; border-bottom: 1px solid #d4d4d4; }

  .formula { display: flex; height: 26px; flex: none; padding: 10px 0 10px 5px; }
  .formula > div { box-sizing: border-box; height: 26px; border: 1px solid #c6c6c6; }
  .namebox { width: 102px; display: flex; align-items: center; justify-content: space-between; padding: 0 5px 0 6px; }
  .dots { margin: 5px 13px 0 13px; }
  .fx { width: 110px; margin-right: 3px; }
  .formula .input { flex: 1; border-right: 0; display: flex; align-items: center; justify-content: flex-end; margin-right: -2px; }

  .sheetwrap { height: 631px; flex: none; display: flex; position: relative; overflow: hidden; font-family: 'Liberation Sans', Arial, sans-serif; border-bottom: 1px solid #ababab; }
  .sheet { display: grid; width: 1419px; flex: none; font-size: 14.67px; color: #000; box-sizing: border-box; }
  .sheet > div { box-sizing: border-box; min-width: 0; min-height: 0; white-space: nowrap; }
  .sheet span { position: relative; }
  .corner { border-bottom: 1px solid #ababab; border-right: 1px solid #dcdcdc; padding: 5px 0 0 14px; }
  .ch { border-bottom: 1px solid #ababab; border-right: 1px solid #d8d8d8; overflow: hidden; display: flex; justify-content: center; line-height: 19px; color: #444; font-size: 15px; }
  .ch.last { justify-content: flex-end; border-right: 0; }
  .ch.last span { margin-right: -15px; }
  .ch.slim { justify-content: flex-start; }
  .ch.narrow { font-size: 13.5px; }
  .ch.on { background: #e1e1e1; color: #217346; font-weight: 700; border-bottom: 2px solid #217346; }
  .rh { grid-column: 1; border-right: 1px solid #ababab; border-bottom: 1px solid #e1e1e1; display: flex; align-items: center; justify-content: center; color: #555; font-size: 15px; padding-top: 1px; line-height: 16px; }
  .rh.on { background: #e1e1e1; color: #217346; font-weight: 700; border-right: 2px solid #217346; }
  .cell { border-right: 1px solid #d4d4d4; border-bottom: 1px solid #d4d4d4; display: flex; align-items: center; justify-content: center; line-height: 16px; padding-top: 1px; }
  .up2 { top: -3px; }
  .num { justify-content: flex-end; padding-right: 2px; }
  .thick { border: 2px solid #000; margin: -2px 0 0 -2px; }
  .thin { border: 1px solid #000; margin: -1px 0 0 -1px; }
  .sheet .side { border: solid #000; border-width: 0 2px 1px; margin-left: -2px; }
  .sheet .lined { border-top-width: 1px; margin-top: -1px; }
  .title { background: #a6a6a6; }
  .mid { background: #bfbfbf; }
  .light { background: #d9d9d9; }
  .pale { background: #f2f2f2; }
  .blue { background: #daeef3; }
  .white { background: #fff; }
  .line { grid-column: 1 / -1; display: flex; align-items: center; line-height: 16px; padding-top: 1px; white-space: pre !important; }
  .h { font-size: 17.6px; }
  .m { font-size: 16px; }
  .s { font-size: 13.2px; }
  .b { font-weight: 700; }
  .red { color: #f00; }
  .selection { border: 2px solid #217346; margin: -2px -1px -1px -1px; position: relative; }
  .selection::after { content: ''; position: absolute; right: -3px; bottom: -3px; width: 5px; height: 5px; background: #217346; border: solid #fff; border-width: 1px 0 0 1px; }

  button { position: absolute; left: 229px; width: 211px; padding: 0; background: #f0f0f0; border: 0 solid #696969; border-width: 0 1px 1px 0; box-shadow: inset -1px -1px #a0a0a0; font: 14.67px 'Liberation Sans', Arial, sans-serif; color: #000; white-space: nowrap; }
  .connect { top: 97px; height: 29px; }
  .disconnect { top: 138px; height: 27px; }
  .clear { top: 242px; height: 27px; width: 210px; }
  .caution { position: absolute; left: 238px; top: 269px; font-size: 10.5px; color: #c00000; white-space: nowrap; line-height: 13px; }
  .logos { position: absolute; left: 730px; top: 419px; }
  svg text.usda { font: 51px 'Liberation Serif', serif; fill: #073567; stroke: #073567; stroke-width: 1.1px; }
  svg text.ars { font: 700 23px 'Liberation Serif', serif; fill: #000080; }
  svg text.ard { font: 700 11px 'Liberation Mono', monospace; fill: #fff; stroke: #fff; stroke-width: 0.3px; }

  .vscroll { margin-left: 3px; width: 4px; display: flex; flex-direction: column; padding-top: 2px; box-sizing: border-box; background: #fff; position: relative; }
  .vscroll::before { content: ''; position: absolute; left: -4px; top: 18px; bottom: 0; width: 1px; background: #ababab; }
  .vscroll > div { box-sizing: border-box; border-left: 1px solid #ababab; flex: none; }
  .vbtn { height: 15px; border-top: 1px solid #ababab; border-bottom: 1px solid #ababab; background: #fff; }
  .vthumb { height: 203px; margin-top: 1px; border-top: 1px solid #ababab; border-bottom: 1px solid #ababab; }
  .vscroll > .vtrack { height: 397px; background: #f0f0f0; border-left: 0; }

  .sheettabs { height: 27px; flex: none; display: flex; background: #f5f5f5; }
  .active { width: 86px; height: 19px; border: solid #ababab; border-width: 0 1px; margin-top: -1px; border-bottom: 2px solid #217346; background: #fff; color: #217346; font-weight: 700; display: flex; justify-content: center; align-items: center; padding-top: 4px; white-space: nowrap; position: relative; }
  .grip { margin: 6px 0 0 616px; }
  .hscroll { display: flex; margin: 6px 0 0 13px; height: 15px; }
  .hscroll > div { box-sizing: border-box; border: 1px solid #ababab; background: #fff; }
  .hbtn { width: 15px; display: flex; align-items: center; justify-content: center; }
  .hthumb { width: 406px; border-left: 0 !important; }
  .hscroll .htrack { width: 102px; background: #e8e8e8; border: 0; }
  .status { height: 22px; flex: none; background: #217346; }
  footer { height: 30px; flex: none; background: #101010; }
</style>
